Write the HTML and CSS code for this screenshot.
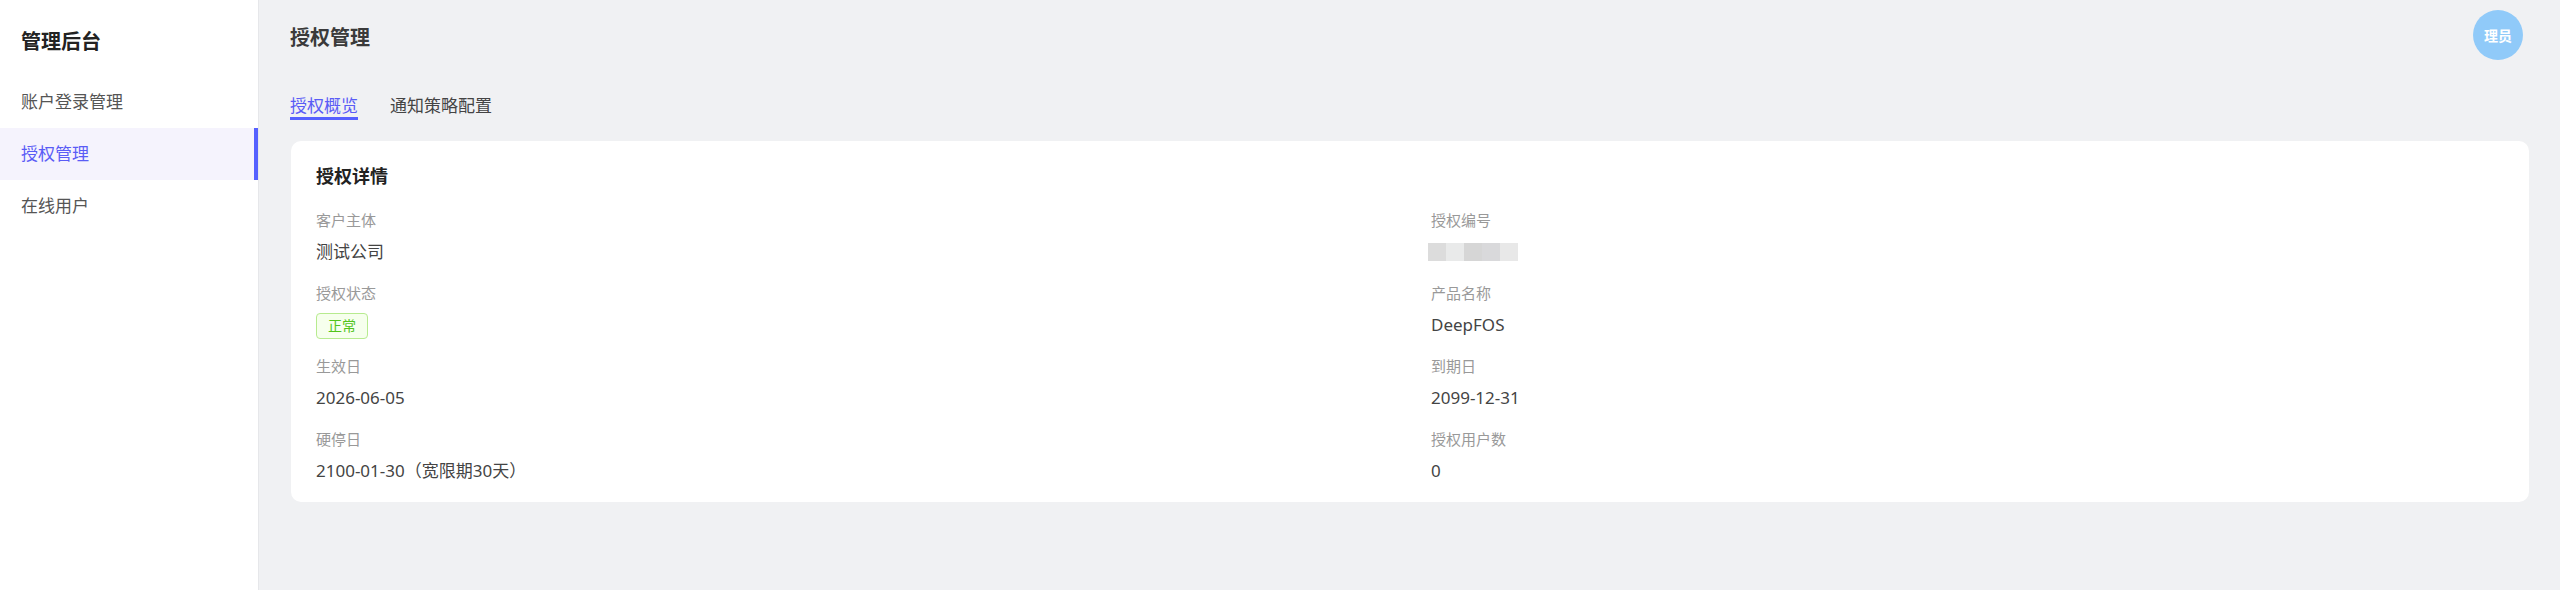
FILE: index.html
```html
<!DOCTYPE html>
<html lang="zh-CN">
<head>
    <meta charset="UTF-8">
    <meta name="viewport" content="width=device-width, initial-scale=1.0">
    <title>授权管理</title>
    <link rel="stylesheet" href="styles.css">
</head>
<body>

<div class="layout">
    <aside class="sidebar">
        <div class="brand">管理后台</div>
        <ul class="menu">
            <li class="menu-item">账户登录管理</li>
            <li class="menu-item active">授权管理</li>
            <li class="menu-item">在线用户</li>
        </ul>
    </aside>

    <main class="main">
        <header class="topbar">
            <h1 class="page-title">授权管理</h1>
            <div class="avatar">理员</div>
        </header>

        <nav class="tabs">
            <span class="tab active">授权概览</span>
            <span class="tab">通知策略配置</span>
        </nav>

        <section class="card">
            <h2 class="card-title">授权详情</h2>
            <div class="detail-grid">
                <div class="field">
                    <div class="field-label">客户主体</div>
                    <div class="field-value">测试公司</div>
                </div>
                <div class="field">
                    <div class="field-label">授权编号</div>
                    <!-- license number is masked -->
                    <div class="field-value masked">
                        <span class="m1"></span><span class="m2"></span><span class="m3"></span><span class="m4"></span><span class="m5"></span>
                    </div>
                </div>
                <div class="field">
                    <div class="field-label">授权状态</div>
                    <div class="field-value"><span class="tag-success">正常</span></div>
                </div>
                <div class="field">
                    <div class="field-label">产品名称</div>
                    <div class="field-value">DeepFOS</div>
                </div>
                <div class="field">
                    <div class="field-label">生效日</div>
                    <div class="field-value">2026-06-05</div>
                </div>
                <div class="field">
                    <div class="field-label">到期日</div>
                    <div class="field-value">2099-12-31</div>
                </div>
                <div class="field">
                    <div class="field-label">硬停日</div>
                    <div class="field-value">2100-01-30（宽限期30天）</div>
                </div>
                <div class="field">
                    <div class="field-label">授权用户数</div>
                    <div class="field-value">0</div>
                </div>
            </div>
        </section>
    </main>
</div>

</body>
</html>
```

FILE: styles.css
```css
* {
    box-sizing: border-box;
}
body {
    margin: 0;
    font-family: "Noto Sans", "Noto Sans CJK SC", sans-serif;
    background-color: #f0f1f3;
    color: #333;
}
.layout {
    display: flex;
    min-height: 590px;
}

/* Sidebar */
.sidebar {
    width: 259px;
    flex-shrink: 0;
    background-color: #fff;
    border-right: 1px solid #e6e7ea;
}
.brand {
    padding: 28px 0 0 21px;
    height: 76px;
    font-size: 20px;
    line-height: 28px;
    font-weight: 700;
    color: #222;
}
.menu {
    list-style: none;
    margin: 0;
    padding: 0;
}
.menu-item {
    height: 52px;
    line-height: 52px;
    padding-left: 21px;
    font-size: 17px;
    color: #555;
}
.menu-item.active {
    background-color: #f5f3fd;
    color: #5a5cf6;
    border-right: 4px solid #5560ff;
}

/* Main area */
.main {
    flex: 1;
    padding: 0 31px 0 32px;
}
.topbar {
    height: 70px;
    display: flex;
    align-items: center;
    justify-content: space-between;
}
.page-title {
    margin: 0 0 0 -1px;
    padding-top: 2px;
    font-size: 20px;
    font-weight: 600;
    color: #3a3a3a;
}
.avatar {
    width: 50px;
    height: 50px;
    margin-right: 6px;
    border-radius: 50%;
    background-color: #90caf9;
    color: #fff;
    font-size: 14px;
    font-weight: 700;
    display: flex;
    align-items: center;
    justify-content: center;
}

.tabs {
    display: flex;
    gap: 32px;
    margin-top: 25px;
    margin-left: -1px;
}
.tab {
    font-size: 17px;
    line-height: 22px;
    color: #444;
    border-bottom: 3px solid transparent;
}
.tab.active {
    color: #5a5cf6;
    border-bottom-color: #5560ff;
}

/* Detail card */
.card {
    margin-top: 21px;
    background-color: #fff;
    border-radius: 10px;
    padding: 22px 25px 18px;
}
.card-title {
    margin: 0;
    font-size: 18px;
    line-height: 26px;
    font-weight: 700;
    color: #222;
}
.detail-grid {
    display: grid;
    grid-template-columns: 1fr 1fr;
    column-gap: 42px;
    row-gap: 17px;
    margin-top: 20px;
}
.field-label {
    font-size: 15px;
    line-height: 22px;
    color: #999;
    margin-bottom: 8px;
}
.field-value {
    font-size: 17px;
    line-height: 26px;
    height: 26px;
    color: #444;
}
.tag-success {
    display: inline-block;
    height: 26px;
    line-height: 24px;
    padding: 0 11px;
    font-size: 14px;
    color: #52c41a;
    background-color: #f6ffed;
    border: 1px solid #b7eb8f;
    border-radius: 4px;
}

.masked {
    display: flex;
    padding-top: 4px;
    margin-left: -3px;
}
.masked span {
    width: 18px;
    height: 18px;
}
.masked .m1 { background-color: #dcdcdc; }
.masked .m2 { background-color: #e9eaea; }
.masked .m3 { background-color: #d6d6d6; }
.masked .m4 { background-color: #d9d9db; }
.masked .m5 { background-color: #e8e8e8; }
```
